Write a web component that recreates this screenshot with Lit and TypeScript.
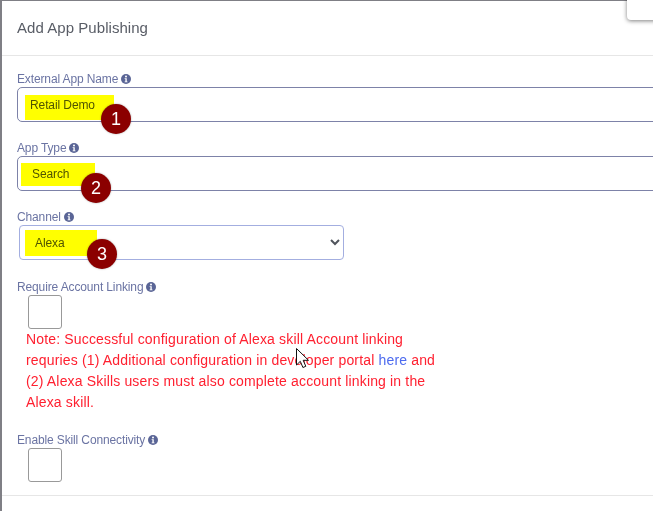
import { LitElement, html, css } from "lit";
import { customElement } from "lit/decorators.js";

const info = html`<svg class="info" viewBox="0 0 16 16" aria-hidden="true"><circle cx="8" cy="8" r="8" fill="#5a6596"/><circle cx="8" cy="4" r="1.6" fill="#fff"/><path d="M5.8 6.6h3.4v5.2h1.2v1.5H5.8v-1.5h1.2V8.1H5.8z" fill="#fff"/></svg>`;

const label = (t: string) => html`<div class="label">${t}${info}</div>`;

@customElement("app-root")
export class AppRoot extends LitElement {
  static styles = css`
    :host { display: block; width: 653px; height: 511px; overflow: hidden; position: relative; background: #fff; font-family: "Liberation Sans", Arial, sans-serif; }
    .modal { box-sizing: border-box; width: 700px; height: 511px; border-left: 2px solid #7f7f85; border-top: 1px solid #7f7f85; background: #fff; }
    .head { box-sizing: border-box; height: 55px; border-bottom: 1px solid #e6e6e6; padding: 18px 0 0 15px; font-size: 15px; letter-spacing: 0.05px; line-height: 18px; color: #595d66; }
    .body { box-sizing: border-box; height: 440px; border-bottom: 1px solid #e6e6e6; padding: 14px 0 0 15px; display: flex; flex-direction: column; }
    .label { flex: none; box-sizing: border-box; padding-top: 2px; display: flex; align-items: center; gap: 3px; height: 16px; font-size: 12px; letter-spacing: -0.13px; line-height: 14px; color: #6b74a3; white-space: nowrap; }
    .info { width: 10px; height: 10px; }
    .input { flex: none; box-sizing: border-box; height: 35px; margin-top: 1px; width: 680px; border: 1px solid #7d82a8; border-radius: 5px; font-size: 12px; letter-spacing: -0.1px; line-height: 35px; color: #50545c; }
    .i1 { padding-left: 12px; margin-bottom: 17px; }
    .i2 { padding-left: 14px; margin-bottom: 17px; }
    select { flex: none; box-sizing: border-box; display: block; height: 35px; width: 325px; margin: 1px 0 18px 2px; padding: 0 0 0 11px; border: 1px solid #a3aee0; border-radius: 4px; background: #fff; font: 12px "Liberation Sans", Arial, sans-serif; letter-spacing: -0.1px; color: #50545c; outline: none; }
    .check { box-sizing: border-box; width: 34px; height: 34px; margin: 1px 0 0 11px; border: 1px solid #999; border-radius: 3px; background: #fff; flex: none; }
    .note { flex: none; width: 420px; margin: 0 0 18px 9px; font-size: 14px; letter-spacing: 0.16px; line-height: 21px; color: #ff2030; }
    .note a { color: #4d6bef; text-decoration: none; }
    .mark { position: absolute; background: #ffff00; mix-blend-mode: multiply; }
    .m1 { left: 25px; top: 95px; width: 89px; height: 25px; }
    .m2 { left: 21px; top: 163px; width: 74px; height: 23px; }
    .m3 { left: 25px; top: 230px; width: 72px; height: 26px; }
    .badge { position: absolute; width: 30px; height: 30px; border-radius: 50%; background: #8b0000; color: #fff; font-size: 18px; line-height: 30px; text-align: center; box-shadow: 0 0 2px rgba(0,0,0,.35); }
    .b1 { left: 101px; top: 104px; }
    .b2 { left: 81px; top: 173px; }
    .b3 { left: 87px; top: 239px; }
    .corner { position: absolute; left: 627px; top: -4px; width: 40px; height: 24px; background: #fff; border-radius: 4px; box-shadow: 0 1px 4px rgba(0,0,0,.5); }
    .cursor { position: absolute; left: 296px; top: 348px; width: 13px; height: 21px; }
  `;

  render() {
    return html`
      <div class="modal">
        <div class="head">Add App Publishing</div>
        <div class="body">
          ${label("External App Name")}
          <div class="input i1">Retail Demo</div>
          ${label("App Type")}
          <div class="input i2">Search</div>
          ${label("Channel")}
          <select><option>Alexa</option></select>
          ${label("Require Account Linking")}
          <div class="check"></div>
          <div class="note">Note: Successful configuration of Alexa skill Account linking requries (1) Additional configuration in developer portal <a href="#">here</a> and (2) Alexa Skills users must also complete account linking in the Alexa skill.</div>
          ${label("Enable Skill Connectivity")}
          <div class="check"></div>
        </div>
      </div>
      <div class="mark m1"></div><div class="mark m2"></div><div class="mark m3"></div>
      <div class="badge b1">1</div><div class="badge b2">2</div><div class="badge b3">3</div>
      <div class="corner"></div>
      <svg class="cursor" viewBox="0 0 13 21" aria-hidden="true"><path d="M.5.5v16.5l3.8-3.7 2.6 6.2 2.9-1.2-2.6-6h5.3z" fill="#fff" stroke="#111" stroke-width="1"/></svg>
    `;
  }
}
